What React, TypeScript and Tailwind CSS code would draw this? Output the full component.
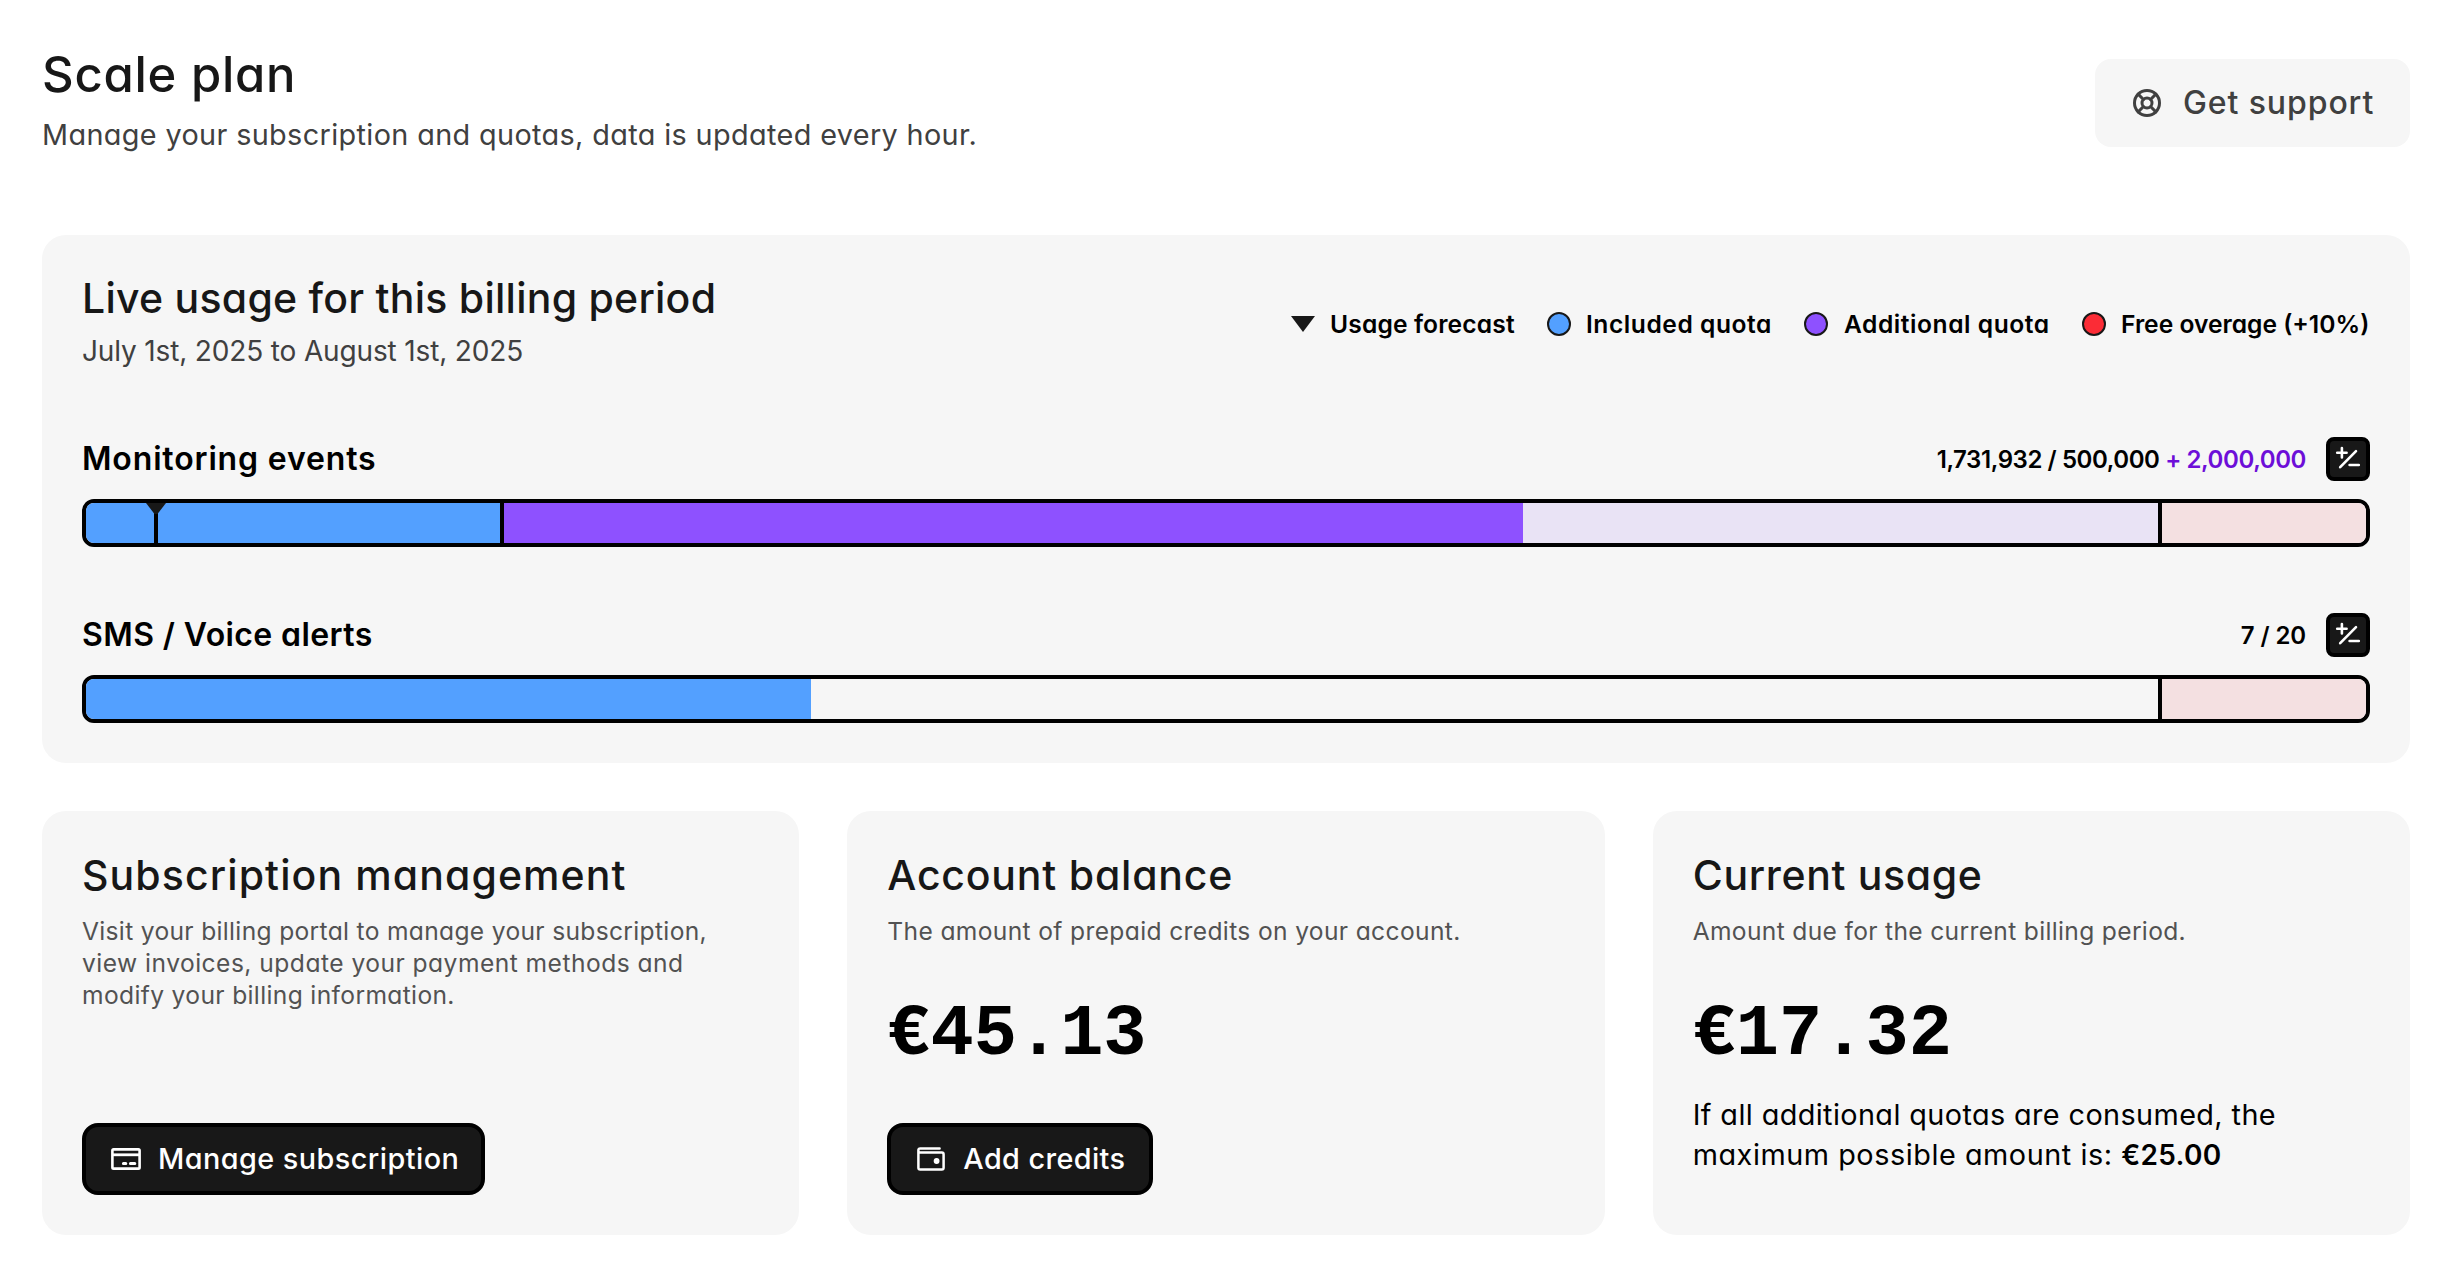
import React from 'react';
import { LifeBuoy } from 'lucide-react';

function AdjustButton() {
  return (
    <button className="flex size-11 items-center justify-center rounded-lg border-4 border-black bg-[#181818]">
      <svg
        width="36"
        height="36"
        viewBox="4 4 36 36"
        fill="none"
        stroke="white"
        strokeWidth="2.6"
        strokeLinecap="round"
        className="shrink-0"
      >
        <path d="M11.2 15.7h9.4M15.9 11v9.4M14.2 30.2 30 14.2M23.6 28h9.2" />
      </svg>
    </button>
  );
}

function CardIcon() {
  return (
    <svg width="30" height="22" viewBox="0 0 30 22" fill="none" stroke="white" strokeWidth="2.6">
      <rect x="1.4" y="1.4" width="27.2" height="19.2" rx="1.2" />
      <path d="M1.4 6.8h27.2" strokeWidth="2.8" />
      <path d="M12.4 15.4h2.4M19.4 15.4h4.4" strokeWidth="3" strokeLinecap="round" />
    </svg>
  );
}

function WalletIcon() {
  return (
    <svg width="28" height="24" viewBox="0 0 28 24" fill="none" stroke="white" strokeWidth="2.5" strokeLinecap="round">
      <path d="M22.6 1.4H3.2C2 1.4 1.4 2 1.4 3.1v17.6c0 1 .7 1.8 1.8 1.8h21.6c1.1 0 1.8-.8 1.8-1.8V7.4c0-1-.7-1.8-1.8-1.8H3.2C2 5.6 1.4 4.7 1.4 3.4" />
      <circle cx="19.6" cy="14" r="2.9" fill="white" stroke="none" />
    </svg>
  );
}

function Dot({ color }: { color: string }) {
  return <span className={`size-6 shrink-0 rounded-full border-2 border-[#181818] ${color}`} />;
}

const cardTitle = 'text-[41px] leading-[48px] font-medium text-neutral-900';
const cardText = 'mt-4 text-[24.6px] leading-8 text-neutral-600';
const card = 'flex h-[424px] flex-col items-start rounded-3xl bg-[#f6f6f6] p-10 whitespace-nowrap';
const darkButton =
  'mt-auto flex h-[72px] items-center rounded-2xl border-4 border-black bg-[#181818] text-[28.8px] font-medium text-white';
const price = "mt-[52px] font-['Liberation_Mono',monospace] text-[72px] leading-[72px] font-bold";
const track = 'relative mt-[18px] flex h-12 overflow-hidden rounded-xl border-4 border-black';

export default function App() {
  return (
    <main className="min-h-screen bg-white pt-[47px] pr-[50px] pl-[42px] font-['Inter',sans-serif] text-black [font-feature-settings:'cv11']">
      <header className="flex h-[188px] items-start justify-between">
        <div>
          <h1 className="text-[49px] leading-[56px] font-medium tracking-[0.75px] text-neutral-900">Scale plan</h1>
          <p className="mt-3 text-[28.8px] leading-10 tracking-[0.37px] text-neutral-700">
            Manage your subscription and quotas, data is updated every hour.
          </p>
        </div>
        <button className="mt-3 flex h-[88px] w-[315px] items-center rounded-2xl bg-[#f6f6f6] pl-[37px] text-[32px] font-medium text-neutral-700">
          <LifeBuoy size={30} strokeWidth={2.4} />
          <span className="ml-[21px] tracking-[0.9px]">Get support</span>
        </button>
      </header>

      <section className="h-[528px] rounded-3xl bg-[#f6f6f6] px-10 pt-[39px]">
        <div className="flex h-[163px] items-start justify-between whitespace-nowrap">
          <div>
            <h2 className="text-[41px] leading-[48px] font-medium tracking-[0.25px] text-neutral-900">
              Live usage for this billing period
            </h2>
            <p className="mt-[9px] text-[28px] leading-10 tracking-[-0.15px] text-neutral-700">
              July 1st, 2025 to August 1st, 2025
            </p>
          </div>
          <ul className="mt-[33px] flex items-center text-[24.6px] leading-8 font-semibold">
            <li className="flex w-[256px] items-center">
              <svg width="24" height="16" viewBox="0 0 24 16" fill="#181818">
                <path d="M0 0h24L12 16z" />
              </svg>
              <span className="mt-px ml-[15px] tracking-[0.15px]">Usage forecast</span>
            </li>
            <li className="flex w-[257px] items-center">
              <Dot color="bg-[#53a0ff]" />
              <span className="mt-px ml-[15px] tracking-[0.55px]">Included quota</span>
            </li>
            <li className="flex w-[278px] items-center">
              <Dot color="bg-[#8e51ff]" />
              <span className="mt-px ml-[16px] tracking-[0.55px]">Additional quota</span>
            </li>
            <li className="flex w-[288px] items-center">
              <Dot color="bg-[#fb2c36]" />
              <span className="mt-px ml-[15px] tracking-[0px]">Free overage (+10%)</span>
            </li>
          </ul>
        </div>

        <div className="flex h-11 items-center justify-between font-semibold">
          <h3 className="text-[32px] leading-[44px] tracking-[0.85px]">Monitoring events</h3>
          <div className="flex items-center gap-5">
            <span className="mt-px text-[24px] leading-[44px] tracking-[-0.42px]">
              1,731,932 / 500,000 <span className="text-[#6d0ed8]">+ 2,000,000</span>
            </span>
            <AdjustButton />
          </div>
        </div>
        <div className={track}>
          <div className="w-[414px] bg-[#53a0ff]" />
          <div className="w-1 bg-black" />
          <div className="w-[1019px] bg-[#8e51ff]" />
          <div className="w-[635px] bg-[#e9e3f5]" />
          <div className="w-1 bg-black" />
          <div className="flex-1 bg-[#f4e0e1]" />
          <div className="absolute top-0 left-[68px] h-full w-1 bg-black" />
          <svg className="absolute top-0 left-[60px]" width="20" height="11" viewBox="0 0 20 11" fill="#181818">
            <path d="M0 0h20L11.5 11h-3z" />
          </svg>
        </div>

        <div className="mt-[66px] flex h-11 items-center justify-between font-semibold">
          <h3 className="text-[32px] leading-[44px] tracking-[0.4px]">SMS / Voice alerts</h3>
          <div className="flex items-center gap-5">
            <span className="mt-px text-[24px] leading-[44px] tracking-[-0.1px]">7 / 20</span>
            <AdjustButton />
          </div>
        </div>
        <div className={track}>
          <div className="w-[725px] bg-[#53a0ff]" />
          <div className="w-[1347px]" />
          <div className="w-1 bg-black" />
          <div className="flex-1 bg-[#f4e0e1]" />
        </div>
      </section>

      <div className="mt-12 grid grid-cols-3 gap-12">
        <section className={card}>
          <h2 className={`${cardTitle} tracking-[1.1px]`}>Subscription management</h2>
          <p className={`${cardText} tracking-[0.35px]`}>
            <span className="tracking-[0.32px]">Visit your billing portal to manage your subscription,</span>
            <br />
            <span className="tracking-[0.47px]">view invoices, update your payment methods and</span>
            <br />
            modify your billing information.
          </p>
          <button className={`${darkButton} w-[403px] pl-[25px] tracking-[0.45px]`}>
            <CardIcon />
            <span className="ml-[17px]">Manage subscription</span>
          </button>
        </section>

        <section className={card}>
          <h2 className={`${cardTitle} tracking-[0.8px]`}>Account balance</h2>
          <p className={`${cardText} tracking-[0.35px]`}>The amount of prepaid credits on your account.</p>
          <p className={price}>€45.13</p>
          <button className={`${darkButton} w-[266px] pl-[26px] tracking-[0.4px]`}>
            <WalletIcon />
            <span className="ml-[18px]">Add credits</span>
          </button>
        </section>

        <section className={card}>
          <h2 className={`${cardTitle} tracking-[0.65px]`}>Current usage</h2>
          <p className={`${cardText} tracking-[0.33px]`}>Amount due for the current billing period.</p>
          <p className={price}>€17.32</p>
          <p className="mt-6 text-[28.8px] leading-10 tracking-[0.4px]">
            If all additional quotas are consumed, the
            <br />
            <span className="tracking-[0.55px]">maximum possible amount is: </span>
            <strong className="text-[28px] font-semibold tracking-[0.3px]">€25.00</strong>
          </p>
        </section>
      </div>
    </main>
  );
}
